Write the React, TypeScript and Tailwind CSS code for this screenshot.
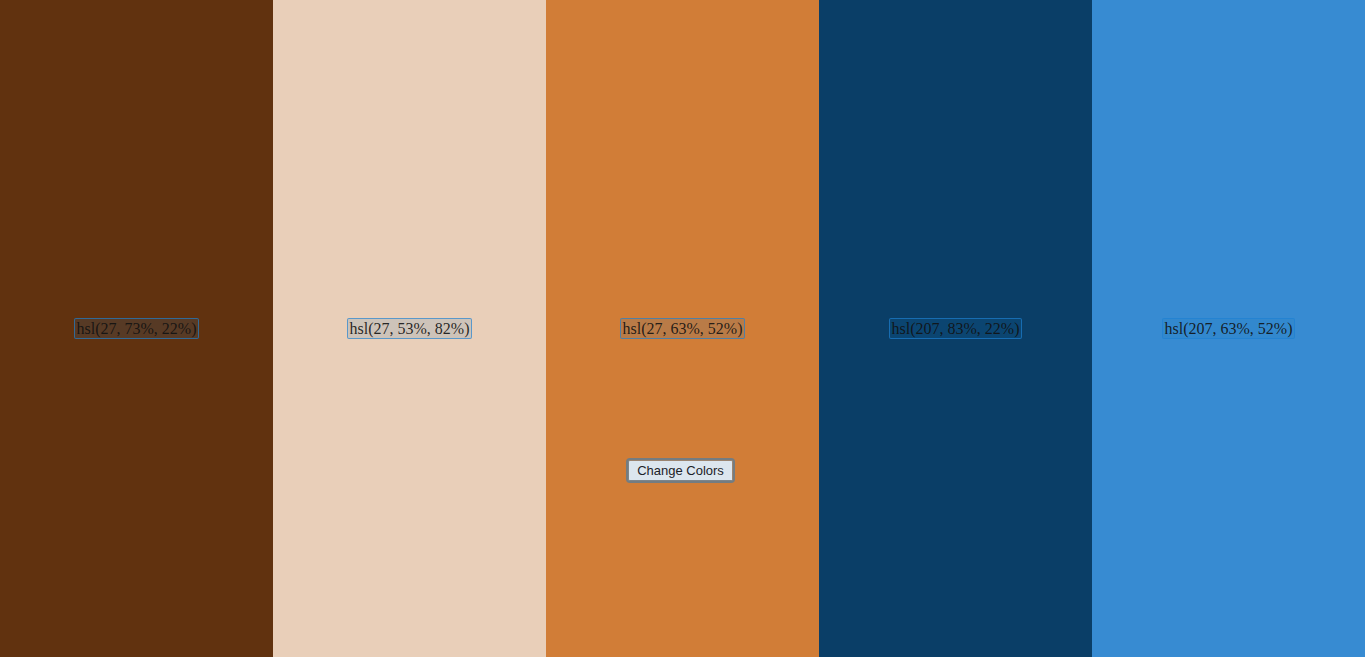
import React from "react";

type Swatch = { label: string; column: string };

const swatches: Swatch[] = [
  { label: "hsl(27, 73%, 22%)", column: "bg-[#61320f]" },
  { label: "hsl(27, 53%, 82%)", column: "bg-[#e9cfb9]" },
  { label: "hsl(27, 63%, 52%)", column: "bg-[#d17d37]" },
  { label: "hsl(207, 83%, 22%)", column: "bg-[#0a3e67]" },
  { label: "hsl(207, 63%, 52%)", column: "bg-[#378bd2]" },
];

export default function App() {
  return (
    <main className="relative grid min-h-screen grid-cols-5">
      {swatches.map(({ label, column }) => (
        <section key={label} className={`flex items-center justify-center ${column}`}>
          <p className="rounded-[1px] bg-[#1676b8]/13 px-0.5 font-['Liberation_Serif',serif] text-base leading-[19px] text-[#111]/90 ring-1 ring-[#1c80d2]/70">
            {label}
          </p>
        </section>
      ))}
      <div className="absolute inset-x-0 bottom-44 flex justify-center pr-1">
        <button
          type="button"
          className="rounded-xs border border-[#9b8571] border-b-[#7d858a] border-l-[#7d858a] bg-[#dce6ee] px-2 font-['Liberation_Sans',sans-serif] text-[13px] leading-[19px] text-[#1b2228] ring-2 ring-[#747c80]"
        >
          Change Colors
        </button>
      </div>
    </main>
  );
}
